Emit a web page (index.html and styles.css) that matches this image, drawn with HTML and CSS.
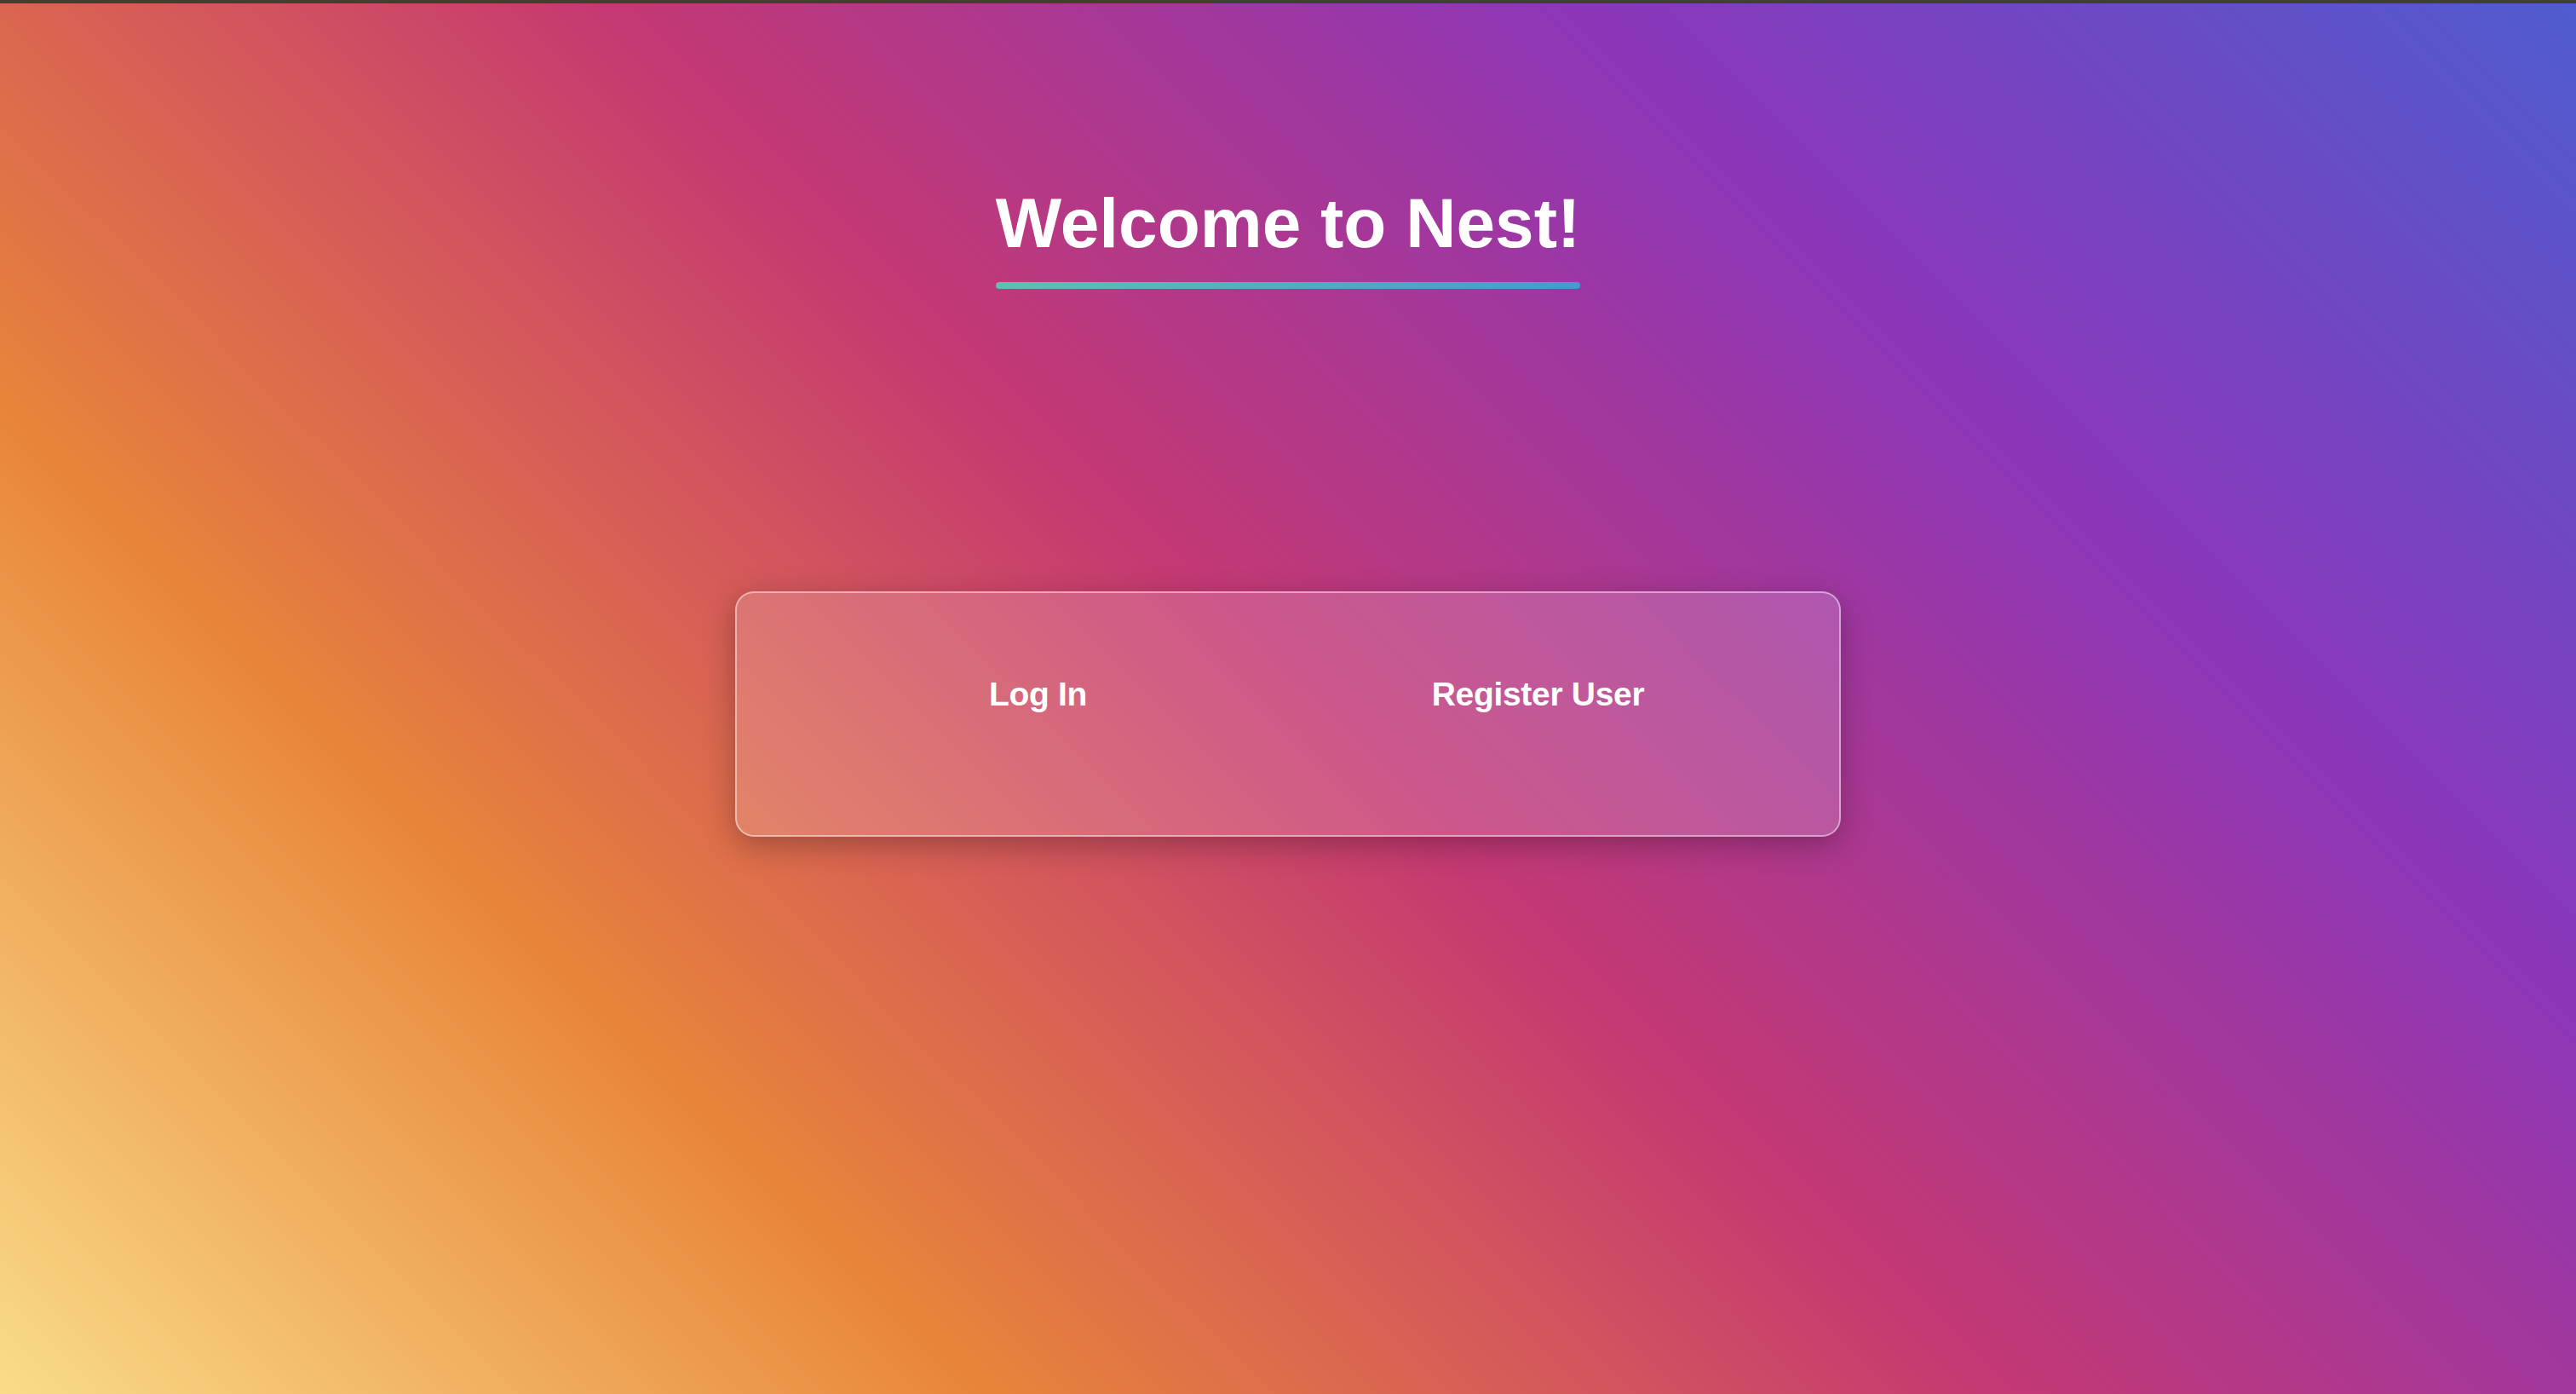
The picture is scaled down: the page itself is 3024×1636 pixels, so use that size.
FILE: index.html
```html
<!DOCTYPE html>
<html lang="en">
<head>
<meta charset="utf-8">
<title>Nest</title>
<link rel="stylesheet" href="styles.css">
</head>
<body>
<div class="topbar"></div>
<main class="page">
  <header class="hero">
    <h1 class="title">Welcome to Nest!</h1>
  </header>
  <section class="card">
    <button class="action">Log In</button>
    <button class="action">Register User</button>
  </section>
</main>
</body>
</html>
```

FILE: styles.css
```css
html, body {
  margin: 0;
  padding: 0;
  height: 100%;
}

body {
  font-family: "Liberation Sans", Arial, Helvetica, sans-serif;
  background: #3f402e;
  overflow: hidden;
}

.topbar {
  height: 4px;
  background: #3f402e;
}

.page {
  min-height: 1632px;
  box-sizing: border-box;
  padding-top: 211px;
  display: flex;
  flex-direction: column;
  align-items: center;
  background: linear-gradient(45deg, #f9dc87 0%, #e8843a 25%, #c53972 50%, #8b36b9 75%, #4f5ccf 100%);
}

.hero {
  display: flex;
  justify-content: center;
}

.title {
  margin: 0;
  font-size: 82px;
  font-weight: 700;
  line-height: normal;
  color: #ffffff;
  display: flex;
  flex-direction: column;
  align-items: stretch;
}

.title::after {
  content: "";
  display: block;
  height: 8px;
  margin-top: 22px;
  border-radius: 4px;
  background: linear-gradient(90deg, #5cc1b0, #4799d1);
}

.card {
  margin-top: 355px;
  width: 1298px;
  height: 288px;
  box-sizing: border-box;
  padding: 97px 60px 0;
  display: flex;
  align-items: flex-start;
  border: 2px solid rgba(255, 255, 255, 0.45);
  border-radius: 22px;
  background: rgba(255, 255, 255, 0.16);
  box-shadow: 0 10px 36px rgba(0, 0, 0, 0.28);
}

.action {
  flex: 1;
  padding: 0;
  border: none;
  background: transparent;
  color: #ffffff;
  font-family: "Liberation Sans", Arial, Helvetica, sans-serif;
  font-size: 39px;
  font-weight: 700;
  letter-spacing: -0.3px;
  line-height: normal;
  text-align: center;
  cursor: pointer;
}
```
